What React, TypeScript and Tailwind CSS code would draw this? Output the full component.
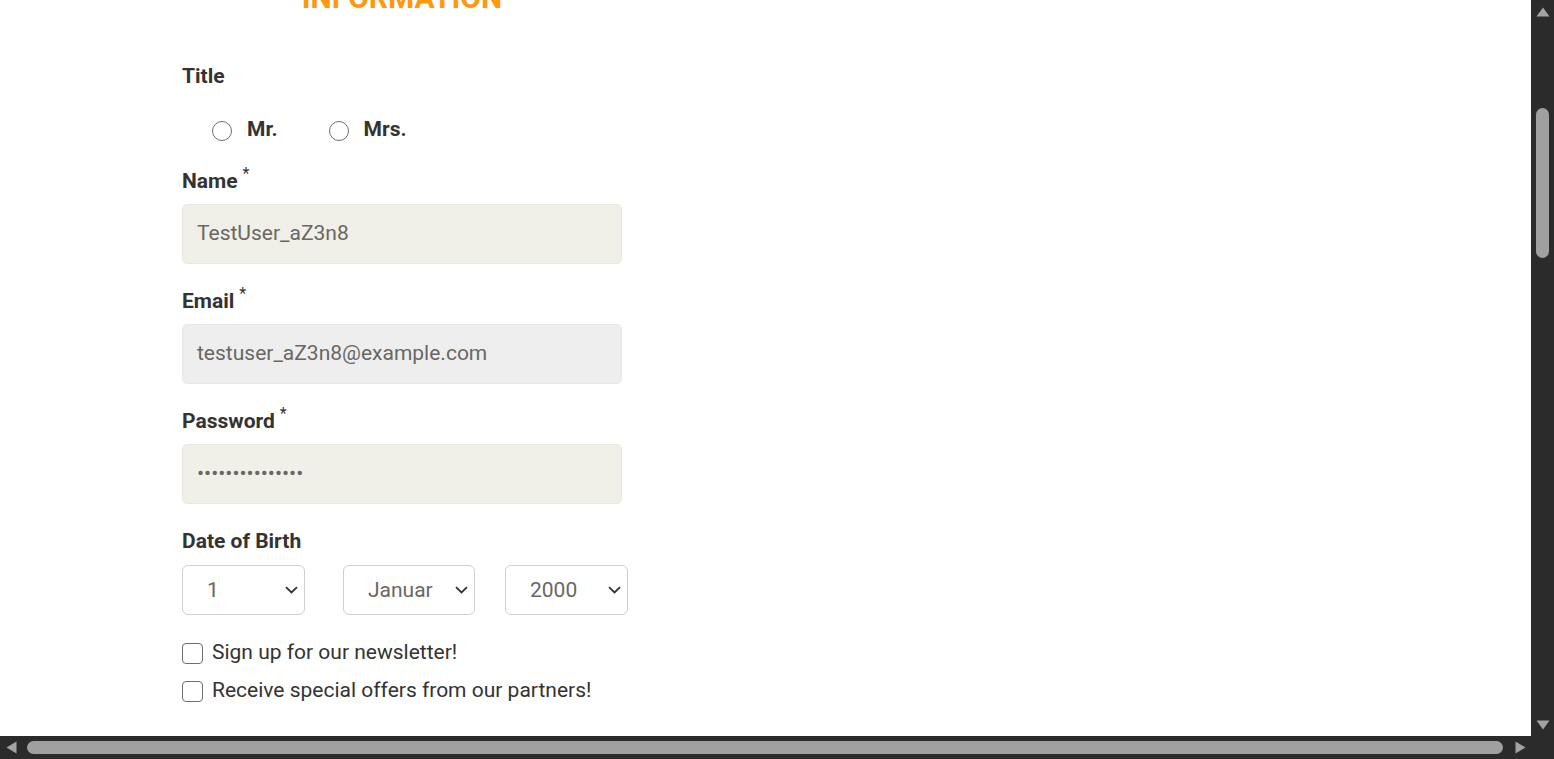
import React from "react";

function Label({ text, required }: { text: string; required?: boolean }) {
  return (
    <div className="h-[24px] leading-[24px] text-[21px] font-bold text-[#333333] flex items-start">
      <span>{text}</span>
      {required && <span className="ml-[5px] relative -top-[3px] text-[16px] leading-[16px] font-normal">*</span>}
    </div>
  );
}

function Chevron() {
  return (
    <svg width="13" height="8" viewBox="0 0 13 8" className="shrink-0">
      <path d="M1 1.2 L6.5 6.5 L12 1.2" fill="none" stroke="#333" strokeWidth="1.8" />
    </svg>
  );
}

function Select({ value, width, textPad }: { value: string; width: string; textPad: string }) {
  return (
    <div className={`h-[50px] ${width} border border-[#cfcfcf] rounded-[6px] bg-white flex items-center justify-between pr-[6px]`}>
      <span className={`${textPad} pt-[2px] text-[21px] text-[#696763]`}>{value}</span>
      <Chevron />
    </div>
  );
}

export default function App() {
  return (
    <div className="w-[1554px] h-[759px] flex flex-col overflow-hidden font-['Roboto',sans-serif] bg-white">
      <div className="flex flex-1 min-h-0">
        <main className="flex-1 overflow-hidden bg-white pl-[182px]">
          <div className="w-[440px] relative">
            <div className="absolute left-[22px] top-[1px] w-[33px] h-[2px] bg-[#eeeeee]" />
            <div className="absolute left-[386px] top-[1px] w-[33px] h-[2px] bg-[#eeeeee]" />
            <h2 className="-mt-[17px] text-center text-[30px] leading-[30px] font-bold text-[#FE980F]">INFORMATION</h2>
          </div>
          <div className="mt-[51px]">
            <Label text="Title" />
          </div>
          <div className="mt-[30px] h-[24px] flex items-center pl-[30px]">
            <div className="mt-[2px] w-[20px] h-[20px] rounded-full border-[1.8px] border-[#6e6e6e]" />
            <span className="ml-[15px] -mt-[1px] text-[21px] font-bold text-[#333333]">Mr.</span>
            <div className="mt-[2px] ml-[51px] w-[20px] h-[20px] rounded-full border-[1.8px] border-[#6e6e6e]" />
            <span className="ml-[15px] -mt-[1px] text-[21px] font-bold text-[#333333]">Mrs.</span>
          </div>
          <div className="mt-[27px]">
            <Label text="Name" required />
          </div>
          <div className="mt-[11px] w-[440px] h-[60px] rounded-[5px] bg-[#F0F0E9] border border-[#e8e7df] flex items-center pl-[14px] text-[21px] text-[#696763]">
            TestUser_aZ3n8
          </div>
          <div className="mt-[25px]">
            <Label text="Email" required />
          </div>
          <div className="mt-[11px] w-[440px] h-[60px] rounded-[5px] bg-[#EEEEEE] border border-[#e8e8e8] flex items-center pl-[14px] text-[21px] text-[#696763]">
            testuser_aZ3n8@example.com
          </div>
          <div className="mt-[25px]">
            <Label text="Password" required />
          </div>
          <div className="mt-[11px] w-[440px] h-[60px] rounded-[5px] bg-[#F0F0E9] border border-[#e8e7df] flex items-center pl-[14px] text-[21px] text-[#696763]">
            •••••••••••••••
          </div>
          <div className="mt-[25px]">
            <Label text="Date of Birth" />
          </div>
          <div className="mt-[12px] flex items-center">
            <Select value="1" width="w-[123px]" textPad="pl-[24px]" />
            <div className="ml-[38px]">
              <Select value="Januar" width="w-[132px]" textPad="pl-[24px]" />
            </div>
            <div className="ml-[30px]">
              <Select value="2000" width="w-[123px]" textPad="pl-[24px]" />
            </div>
          </div>
          <div className="mt-[26px] h-[24px] flex items-center">
            <div className="w-[21px] h-[21px] rounded-[4px] border-[1.5px] border-[#6e6e6e]" />
            <span className="ml-[9px] text-[21px] text-[#333333]">Sign up for our newsletter!</span>
          </div>
          <div className="mt-[14px] h-[24px] flex items-center">
            <div className="w-[21px] h-[21px] rounded-[4px] border-[1.5px] border-[#6e6e6e]" />
            <span className="ml-[9px] text-[21px] text-[#333333]">Receive special offers from our partners!</span>
          </div>
        </main>
        <div className="w-[23px] bg-[#2b2b2b] flex flex-col items-center">
          <svg width="14" height="10" viewBox="0 0 14 10" className="mt-[7px]">
            <path d="M7 0.5 L13.5 9.5 L0.5 9.5 Z" fill="#a3a3a3" />
          </svg>
          <div className="mt-[91px] w-[13px] h-[150px] rounded-full bg-[#a0a0a0]" />
          <div className="flex-1" />
          <svg width="14" height="10" viewBox="0 0 14 10" className="mb-[6px]">
            <path d="M0.5 0.5 L13.5 0.5 L7 9.5 Z" fill="#a3a3a3" />
          </svg>
        </div>
      </div>
      <div className="h-[23px] bg-[#2b2b2b] flex items-center">
        <svg width="11" height="13" viewBox="0 0 11 13" className="ml-[6px]">
          <path d="M0.5 6.5 L10.5 0.5 L10.5 12.5 Z" fill="#a3a3a3" />
        </svg>
        <div className="ml-[10px] w-[1476px] h-[13px] rounded-full bg-[#a0a0a0]" />
        <svg width="11" height="13" viewBox="0 0 11 13" className="ml-[12px]">
          <path d="M0.5 0.5 L10.5 6.5 L0.5 12.5 Z" fill="#a3a3a3" />
        </svg>
      </div>
    </div>
  );
}
